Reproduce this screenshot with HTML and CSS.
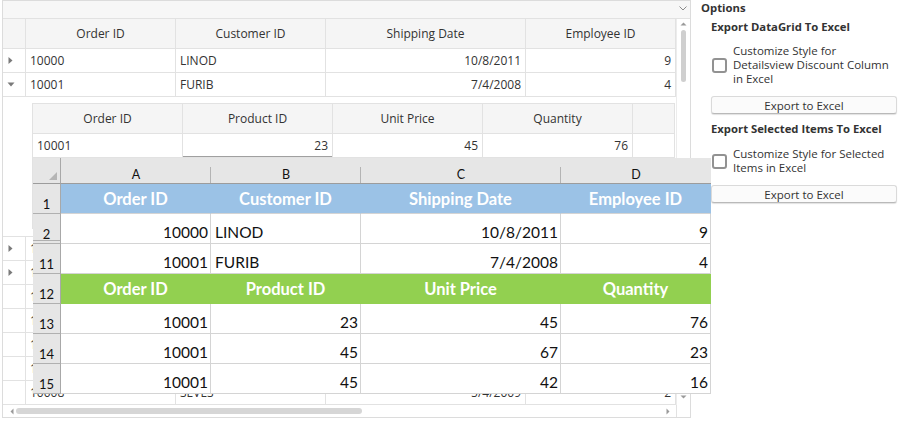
FILE: index.html
```html
<!DOCTYPE html>
<html>
<head>
<meta charset="utf-8">
<link rel="stylesheet" href="styles.css">
</head>
<body>
<div class="app">
  <div class="grid">
    <div class="groupbar">
      <svg class="chev" width="8" height="5" viewBox="0 0 8 5"><polyline points="0.5,0.5 4,4 7.5,0.5" fill="none" stroke="#8a8a8a" stroke-width="1"/></svg>
    </div>
    <div class="gbody">
      <div class="gcontent">
        <div class="mrow head">
          <div class="c ind"></div>
          <div class="c ctr">Order ID</div>
          <div class="c ctr">Customer ID</div>
          <div class="c ctr">Shipping Date</div>
          <div class="c ctr">Employee ID</div>
        </div>
        <div class="mrow">
          <div class="c ind"><svg class="exp" width="9" height="9" viewBox="0 0 9 9"><path d="M1.5 1 L5.5 4.5 L1.5 8 Z"/></svg></div>
          <div class="c">10000</div><div class="c">LINOD</div><div class="c r">10/8/2011</div><div class="c r">9</div>
        </div>
        <div class="mrow">
          <div class="c ind"><svg class="exp" width="9" height="9" viewBox="0 0 9 9"><path d="M0.5 2.5 L7.5 2.5 L4 6.5 Z"/></svg></div>
          <div class="c">10001</div><div class="c">FURIB</div><div class="c r">7/4/2008</div><div class="c r">4</div>
        </div>
        <div class="detail">
          <div class="ngrid">
            <div class="nrow head">
              <div class="c ctr">Order ID</div><div class="c ctr">Product ID</div><div class="c ctr">Unit Price</div><div class="c ctr">Quantity</div><div class="c"></div>
            </div>
            <div class="nrow">
              <div class="c">10001</div><div class="c r cur">23</div><div class="c r">45</div><div class="c r">76</div><div class="c"></div>
            </div>
            <div class="nrow">
              <div class="c"></div><div class="c"></div><div class="c"></div><div class="c"></div><div class="c"></div>
            </div>
            <div class="nrow">
              <div class="c"></div><div class="c"></div><div class="c"></div><div class="c"></div><div class="c"></div>
            </div>
          </div>
        </div>
        <div class="mrow">
          <div class="c ind"><svg class="exp" width="9" height="9" viewBox="0 0 9 9"><path d="M1.5 1 L5.5 4.5 L1.5 8 Z"/></svg></div>
          <div class="c">10002</div><div class="c"></div><div class="c r"></div><div class="c r"></div>
        </div>
        <div class="mrow">
          <div class="c ind"><svg class="exp" width="9" height="9" viewBox="0 0 9 9"><path d="M1.5 1 L5.5 4.5 L1.5 8 Z"/></svg></div>
          <div class="c">10003</div><div class="c"></div><div class="c r"></div><div class="c r"></div>
        </div>
        <div class="mrow">
          <div class="c ind"></div>
          <div class="c">10004</div><div class="c"></div><div class="c r"></div><div class="c r"></div>
        </div>
        <div class="mrow">
          <div class="c ind"></div>
          <div class="c">10005</div><div class="c"></div><div class="c r"></div><div class="c r"></div>
        </div>
        <div class="mrow">
          <div class="c ind"></div>
          <div class="c">10006</div><div class="c"></div><div class="c r"></div><div class="c r"></div>
        </div>
        <div class="mrow">
          <div class="c ind"></div>
          <div class="c">10007</div><div class="c"></div><div class="c r"></div><div class="c r"></div>
        </div>
        <div class="mrow">
          <div class="c ind"></div>
          <div class="c">10008</div><div class="c">SEVES</div><div class="c r">5/4/2009</div><div class="c r">2</div>
        </div>
      </div>
      <div class="vscroll">
        <svg class="varrow" width="7" height="4" viewBox="0 0 7 4"><path d="M0.5 3.5 L3.5 0.5 L6.5 3.5 Z" fill="#9a9a9a"/></svg>
        <div class="vthumb"></div>
        <svg class="varrow down" width="7" height="4" viewBox="0 0 7 4"><path d="M0.5 0.5 L6.5 0.5 L3.5 3.5 Z" fill="#9a9a9a"/></svg>
      </div>
    </div>
    <div class="hbar">
      <div class="hscroll">
        <svg class="harrow" width="4" height="7" viewBox="0 0 4 7"><path d="M3.5 0.5 L3.5 6.5 L0.5 3.5 Z" fill="#9a9a9a"/></svg>
        <div class="hthumb"></div>
        <svg class="harrow right" width="4" height="7" viewBox="0 0 4 7"><path d="M0.5 0.5 L0.5 6.5 L3.5 3.5 Z" fill="#9a9a9a"/></svg>
      </div>
      <div class="corner"></div>
    </div>
  </div>

  <div class="options">
    <div class="title">Options</div>
    <div class="sect">
      <div class="stitle">Export DataGrid To Excel</div>
      <div class="check one">
        <span class="box"></span>
        <span class="lbl">Customize Style for<br>Detailsview Discount Column<br>in Excel</span>
      </div>
      <div class="btn b1">Export to Excel</div>
      <div class="stitle s2">Export Selected Items To Excel</div>
      <div class="check two">
        <span class="box"></span>
        <span class="lbl">Customize Style for Selected<br>Items in Excel</span>
      </div>
      <div class="btn b2">Export to Excel</div>
    </div>
  </div>

  <div class="excel">
    <div class="xcorner"><svg width="28" height="26" viewBox="0 0 28 26"><path d="M24 14 L24 22 L16 22 Z" fill="#b5b5b5"/></svg></div>
    <div class="xh">A</div>
    <div class="xh">B</div>
    <div class="xh">C</div>
    <div class="xh last">D</div>

    <div class="xr">1</div>
    <div class="xc hb">Order ID</div>
    <div class="xc hb">Customer ID</div>
    <div class="xc hb">Shipping Date</div>
    <div class="xc hb">Employee ID</div>

    <div class="xr dbl">2</div>
    <div class="xc r">10000</div>
    <div class="xc">LINOD</div>
    <div class="xc r">10/8/2011</div>
    <div class="xc r">9</div>

    <div class="xr">11</div>
    <div class="xc r">10001</div>
    <div class="xc">FURIB</div>
    <div class="xc r">7/4/2008</div>
    <div class="xc r">4</div>

    <div class="xr">12</div>
    <div class="xc hg">Order ID</div>
    <div class="xc hg">Product ID</div>
    <div class="xc hg">Unit Price</div>
    <div class="xc hg">Quantity</div>

    <div class="xr">13</div>
    <div class="xc r">10001</div>
    <div class="xc r">23</div>
    <div class="xc r">45</div>
    <div class="xc r">76</div>

    <div class="xr">14</div>
    <div class="xc r">10001</div>
    <div class="xc r">45</div>
    <div class="xc r">67</div>
    <div class="xc r">23</div>

    <div class="xr">15</div>
    <div class="xc r">10001</div>
    <div class="xc r">45</div>
    <div class="xc r">42</div>
    <div class="xc r">16</div>
  </div>
</div>
</body>
</html>
```

FILE: styles.css
```css
* { box-sizing: border-box; }

body {
  margin: 0;
  font-family: "Open Sans", "Noto Sans", sans-serif;
  font-size: 12px;
  color: #333;
  background: #fff;
}

.app {
  position: relative;
  width: 903px;
  height: 429px;
  display: flex;
  align-items: flex-start;
  padding-left: 2px;
  overflow: hidden;
}

/* ---------- main grid ---------- */
.grid {
  width: 689px;
  height: 418px;
  border: 1px solid #dcdcdc;
  display: flex;
  flex-direction: column;
  flex: none;
}

.groupbar {
  height: 18px;
  background: #f7f7f7;
  border-bottom: 1px solid #e2e2e2;
  display: flex;
  justify-content: flex-end;
  align-items: center;
  padding-right: 3px;
  padding-bottom: 2px;
}

.gbody {
  height: 386px;
  display: flex;
}

.gcontent {
  width: 673px;
  display: flex;
  flex-direction: column;
}

.mrow {
  display: grid;
  grid-template-columns: 23px 150px 150px 200px 150px;
  height: 24px;
  border-bottom: 1px solid #e2e2e2;
}

.mrow.head {
  height: 30px;
  background: #f5f5f5;
}

.c {
  display: flex;
  align-items: center;
  padding: 0 4px;
  border-right: 1px solid #e2e2e2;
  white-space: nowrap;
  overflow: hidden;
}

.c.ctr { justify-content: center; }
.c.r { justify-content: flex-end; }

.c.ind { padding-left: 4px; }

.exp { fill: #7a7a7a; }

.detail {
  height: 140px;
  border-bottom: 1px solid #e2e2e2;
  padding: 6px 0 0 29px;
}

.ngrid {
  width: 643px;
  height: 126px;
  border-left: 1px solid #e2e2e2;
  border-top: 1px solid #e2e2e2;
}

.nrow {
  display: grid;
  grid-template-columns: 150px 150px 150px 150px 42px;
  height: 24px;
  border-bottom: 1px solid #e2e2e2;
}

.nrow.head {
  height: 30px;
  background: #f5f5f5;
}

.c.cur { box-shadow: inset 0 -1px 0 #a0a0a0; }

.vscroll {
  width: 14px;
  border-left: 1px solid #ececec;
  display: flex;
  flex-direction: column;
  align-items: center;
  padding: 3px 0 6px;
}

.vthumb {
  width: 5px;
  height: 52px;
  margin-top: 4px;
  border-radius: 3px;
  background: #cfcfcf;
}

.varrow.down { margin-top: auto; }

.hbar {
  height: 12px;
  display: flex;
}

.hscroll {
  flex: 1;
  display: flex;
  align-items: center;
  padding: 0 6px 0 7px;
}

.hthumb {
  width: 346px;
  height: 6px;
  margin-left: 2px;
  border-radius: 3px;
  background: #d6d6d6;
}

.harrow.right { margin-left: auto; }

.corner {
  width: 14px;
  border-left: 1px solid #e2e2e2;
}

/* ---------- options panel ---------- */
.options {
  width: 206px;
  margin-left: 6px;
  padding-left: 4px;
  flex: none;
  font-size: 11.5px;
}

.title {
  font-weight: 700;
  font-size: 11.3px;
  line-height: 16px;
}

.sect {
  padding-left: 10px;
  padding-right: 6px;
}

.stitle {
  font-weight: 700;
  font-size: 11.3px;
  line-height: 16px;
  margin-top: 3px;
}

.stitle.s2 { margin-top: 7px; }

.check {
  display: flex;
  align-items: center;
  gap: 6px;
  padding-left: 1px;
}

.check.one { margin-top: 9px; }
.check.two { margin-top: 10px; }

.box {
  width: 15px;
  height: 15px;
  border: 2px solid #929292;
  border-radius: 3px;
  flex: none;
  background: #fff;
}

.lbl {
  line-height: 14px;
}

.btn {
  height: 18px;
  border: 1px solid #dadada;
  border-bottom-color: #b9b9b9;
  border-radius: 3px;
  background: #fbfbfb;
  display: flex;
  align-items: center;
  justify-content: center;
  box-shadow: 0 1px 1px rgba(0,0,0,0.12);
}

.btn.b1 { margin-top: 10px; }
.btn.b2 { margin-top: 10px; }

/* ---------- excel overlay ---------- */
.excel {
  position: absolute;
  left: 33px;
  top: 158px;
  width: 678px;
  display: grid;
  grid-template-columns: 28px 150px 150px 200px 150px;
  grid-template-rows: 26px repeat(7, 30px);
  font-family: "Lato", "Open Sans", sans-serif;
  color: #111;
  background: #fff;
}

.xcorner {
  background: #e6e6e6;
  border-right: 1px solid #a8a8a8;
  border-bottom: 1px solid #9c9c9c;
}

.xcorner svg { display: block; }

.xh {
  position: relative;
  background: #e6e6e6;
  border-bottom: 1px solid #9c9c9c;
  display: flex;
  align-items: flex-end;
  justify-content: center;
  font-size: 12.5px;
  line-height: 16px;
  padding-bottom: 0;
}

.xh::after {
  content: "";
  position: absolute;
  right: 0;
  bottom: 0;
  width: 1px;
  height: 16px;
  background: #b4b4b4;
}

.xh.last::after { display: none; }

.xr {
  background: #e6e6e6;
  border-right: 1px solid #a8a8a8;
  border-bottom: 1px solid #b0b0b0;
  display: flex;
  align-items: flex-end;
  justify-content: center;
  font-size: 13px;
  line-height: 16px;
  padding-bottom: 1px;
}

.xr.dbl { box-shadow: inset 0 -3px 0 -1px #e6e6e6, inset 0 -3px 0 #b0b0b0; }

.xc {
  border-right: 1px solid #d4d4d4;
  border-bottom: 1px solid #d4d4d4;
  display: flex;
  align-items: flex-end;
  padding: 0 2px 1px 4px;
  font-size: 15.5px;
  line-height: 20px;
  white-space: nowrap;
}

.xc.r { justify-content: flex-end; }

.xc.hb,
.xc.hg {
  align-items: center;
  justify-content: center;
  padding: 0;
  font-weight: 700;
  font-size: 16.5px;
  color: #fff;
}

.xc.hb {
  background: #9bc2e6;
  border-right-color: #9bc2e6;
  border-bottom-color: #d4d4d4;
}

.xc.hg {
  background: #92d050;
  border-right-color: #92d050;
  border-bottom-color: #92d050;
}
```
